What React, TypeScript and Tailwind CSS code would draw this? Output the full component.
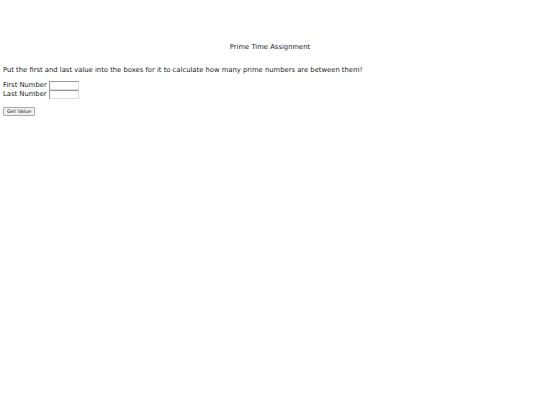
export default function App() {
  return (
    <div className="min-h-screen bg-white text-[6.8px] leading-[9px] text-[#222] font-['DejaVu_Sans',sans-serif] px-[3px]">
      <div className="pt-[43px] text-center">Prime Time Assignment</div>

      <p className="mt-[14px]">
        Put the first and last value into the boxes for it to calculate how many prime numbers are between them!
      </p>

      <div className="mt-[6px] flex flex-col">
        <label className="flex items-center h-[9px]">
          First Number
          <input
            type="text"
            className="ml-[2px] w-[30px] h-[9px] border border-t-[#999] border-l-[#999] border-r-[#ddd] border-b-[#ddd] bg-white outline-none"
          />
        </label>
        <label className="flex items-center h-[9px]">
          Last Number
          <input
            type="text"
            className="ml-[2px] w-[30px] h-[9px] border border-t-[#999] border-l-[#999] border-r-[#ddd] border-b-[#ddd] bg-white outline-none"
          />
        </label>
      </div>

      <button className="mt-[8px] h-[9px] px-[3px] text-[5px] leading-[7px] border border-[#aaa] rounded-[1px] bg-[#f0f0f0] text-[#222]">
        Get Value
      </button>
    </div>
  );
}
